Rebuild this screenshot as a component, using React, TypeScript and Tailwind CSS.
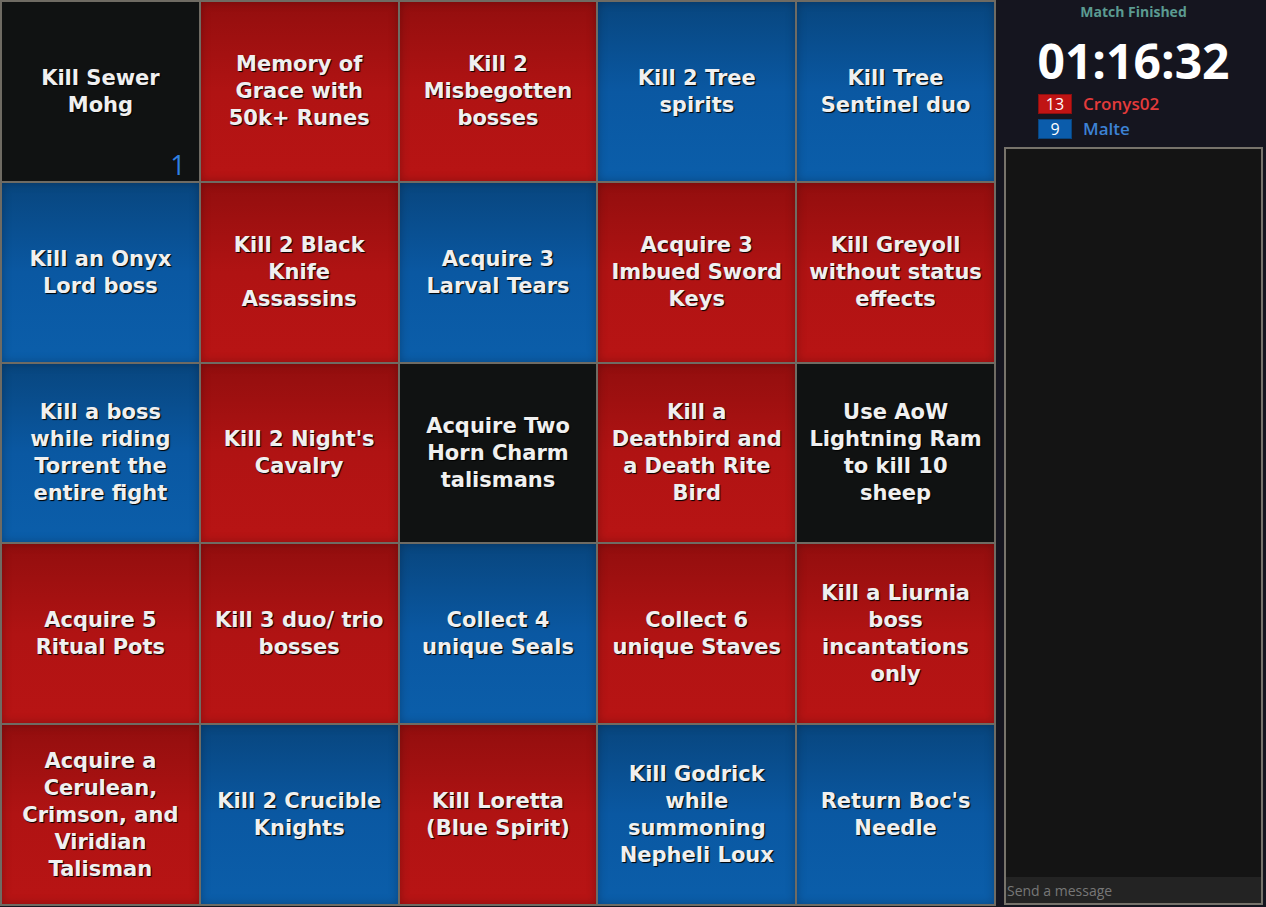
import React from "react";

type C = "r" | "b" | "k";
const cells: { t: string; c: C }[] = [
  { t: "Kill Sewer Mohg", c: "k" },
  { t: "Memory of Grace with 50k+ Runes", c: "r" },
  { t: "Kill 2 Misbegotten bosses", c: "r" },
  { t: "Kill 2 Tree spirits", c: "b" },
  { t: "Kill Tree Sentinel duo", c: "b" },
  { t: "Kill an Onyx Lord boss", c: "b" },
  { t: "Kill 2 Black Knife Assassins", c: "r" },
  { t: "Acquire 3 Larval Tears", c: "b" },
  { t: "Acquire 3 Imbued Sword Keys", c: "r" },
  { t: "Kill Greyoll without status effects", c: "r" },
  { t: "Kill a boss while riding Torrent the entire fight", c: "b" },
  { t: "Kill 2 Night's Cavalry", c: "r" },
  { t: "Acquire Two Horn Charm talismans", c: "k" },
  { t: "Kill a Deathbird and a Death Rite Bird", c: "r" },
  { t: "Use AoW Lightning Ram to kill 10 sheep", c: "k" },
  { t: "Acquire 5 Ritual Pots", c: "r" },
  { t: "Kill 3 duo/ trio bosses", c: "r" },
  { t: "Collect 4 unique Seals", c: "b" },
  { t: "Collect 6 unique Staves", c: "r" },
  { t: "Kill a Liurnia boss incantations only", c: "r" },
  { t: "Acquire a Cerulean, Crimson, and Viridian Talisman", c: "r" },
  { t: "Kill 2 Crucible Knights", c: "b" },
  { t: "Kill Loretta (Blue Spirit)", c: "r" },
  { t: "Kill Godrick while summoning Nepheli Loux", c: "b" },
  { t: "Return Boc's Needle", c: "b" },
];

const bg: Record<C, string> = {
  r: "bg-linear-to-b from-[#930e0e] via-[#b01313] to-[#b81414] shadow-[inset_0_0_10px_rgba(0,0,0,0.25)]",
  b: "bg-linear-to-b from-[#08467f] via-[#0a58a2] to-[#0b5eaa] shadow-[inset_0_0_10px_rgba(0,0,0,0.25)]",
  k: "bg-[#101212]",
};

export default function App() {
  return (
    <div className="flex w-[1266px] h-[907px] bg-[#15151f] overflow-hidden">
      <div className="grid grid-cols-5 grid-rows-5 gap-[2px] p-[2px] bg-[#6f6b63] w-[996px] h-[906px]">
        {cells.map((cell, i) => (
          <div
            key={i}
            className={`relative flex items-center justify-center px-2 pt-[1px] text-center text-[21px] leading-[27px] font-bold text-[#f0f0f0] [text-shadow:1px_1px_1px_#000] ${bg[cell.c]}`}
            style={{ fontFamily: '"DejaVu Sans", sans-serif' }}
          >
            {cell.t}
            {i === 0 && (
              <span
                className="absolute right-[13px] bottom-[3px] text-[27px] leading-none font-normal text-[#2f80e0] [text-shadow:none]"
                style={{ fontFamily: '"Open Sans", sans-serif' }}
              >
                1
              </span>
            )}
          </div>
        ))}
      </div>
      <div
        className="flex flex-col w-[270px] pl-2 pr-[3px] pb-[2px]"
        style={{ fontFamily: '"Open Sans", sans-serif' }}
      >
        <div className="text-center text-[14px] font-bold text-[#5b9b91] leading-[20px] pt-[2px]">
          Match Finished
        </div>
        <div className="text-center text-[48px] font-bold text-white leading-[48px] mt-[15px]">
          01:16:32
        </div>
        <div className="flex flex-col gap-[5px] ml-[34px] mt-[9px]">
          <div className="flex items-center gap-[11px]">
            <div className="w-[34px] h-[20px] shrink-0 bg-[#c01414] border border-[#8a1010] text-white text-[16px] leading-[18px] text-center">
              13
            </div>
            <span className="text-[17px] font-semibold text-[#e43b3b] leading-[20px]">Cronys02</span>
          </div>
          <div className="flex items-center gap-[11px]">
            <div className="w-[34px] h-[20px] shrink-0 bg-[#0b5cab] border border-[#08457f] text-white text-[16px] leading-[18px] text-center">
              9
            </div>
            <span className="text-[17px] font-semibold text-[#3d82d4] leading-[20px]">Malte</span>
          </div>
        </div>
        <div className="flex-1 mt-[8px] flex flex-col border-2 border-[#77736b] bg-[#141414]">
          <div className="flex-1" />
          <div className="h-[26px] bg-[#232323] flex items-center px-[1px] text-[14px] text-[#777777]">
            Send a message
          </div>
        </div>
      </div>
    </div>
  );
}
